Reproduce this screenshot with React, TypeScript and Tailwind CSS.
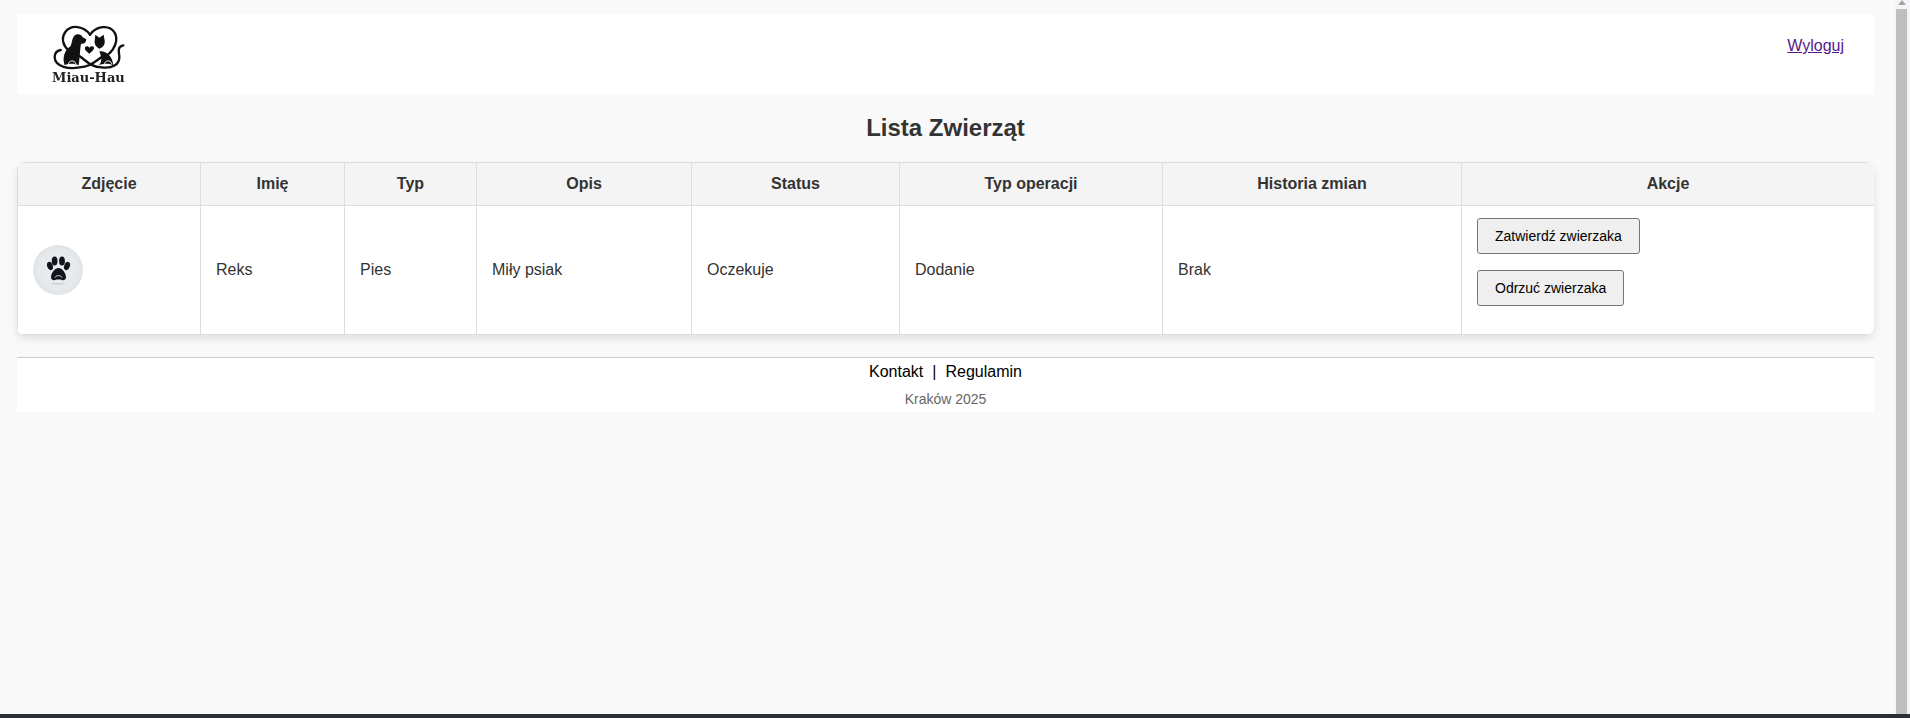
const columns = [
  { label: 'Zdjęcie', width: 'w-[183px]' },
  { label: 'Imię', width: 'w-[144px]' },
  { label: 'Typ', width: 'w-[132px]' },
  { label: 'Opis', width: 'w-[215px]' },
  { label: 'Status', width: 'w-[208px]' },
  { label: 'Typ operacji', width: 'w-[263px]' },
  { label: 'Historia zmian', width: 'w-[299px]' },
  { label: 'Akcje', width: 'w-[413px]' },
]

const cells = ['Reks', 'Pies', 'Miły psiak', 'Oczekuje', 'Dodanie', 'Brak']

function Logo() {
  return (
    <div className="flex w-[100px] flex-col">
      <svg viewBox="0 0 300 150" className="h-[50px] w-[100px] blur-[0.3px]" aria-hidden="true">
        <g fill="none" stroke="#111" strokeWidth="7" strokeLinecap="round">
          <path d="M150 44C132 18 94 12 76 36C62 56 70 78 86 92" />
          <path d="M150 44C168 18 208 12 224 38C236 60 224 86 206 102" />
          <path d="M118 108C140 124 155 142 185 142C215 146 240 135 238 108C236 92 232 80 250 76" />
          <path d="M190 108C165 124 150 142 118 142C90 148 45 142 44 112C44 100 52 92 62 90" />
        </g>
        <path
          d="M102 48C110 40 124 42 128 52L138 57C140 66 132 73 123 71C120 86 120 110 116 136C104 130 86 130 74 136C66 112 74 90 92 78C96 68 96 56 102 48Z"
          fill="#111"
        />
        <path d="M164 62L166 44L178 53L191 44L194 62C196 77 185 83 179 86C170 82 162 73 164 62Z" fill="#111" />
        <path d="M178 94C198 92 218 108 220 136C208 130 190 130 176 136C190 124 182 106 178 94Z" fill="#111" />
        <path d="M148 101C137 93 133 88 135 82C139 77 146 78 148 84C150 78 158 77 162 82C163 88 158 93 148 101Z" fill="#111" />
        <path d="M84 136C86 120 102 118 108 132" fill="none" stroke="#fff" strokeWidth="3" />
        <path d="M192 136C194 120 210 118 216 132" fill="none" stroke="#fff" strokeWidth="3" />
      </svg>
      <span className="ml-[12px] mt-[1px] font-['DejaVu_Serif',serif] text-[13px] font-bold leading-[13px] text-[#222] blur-[0.3px]">
        Miau-Hau
      </span>
    </div>
  )
}

function PawAvatar() {
  return (
    <div className="h-[50px] w-[50px] rounded-full bg-[radial-gradient(circle,#eceff1_0%,#e6e9ec_55%,#d3d9dd_100%)]">
      <svg viewBox="0 0 50 50" className="h-[50px] w-[50px] blur-[0.2px]" fill="#10161c" aria-hidden="true">
        <ellipse cx="17" cy="21" rx="2.8" ry="4.2" transform="rotate(-20 17 21)" />
        <ellipse cx="21.6" cy="16" rx="2.9" ry="4.6" />
        <ellipse cx="29" cy="16" rx="2.9" ry="4.6" />
        <ellipse cx="34" cy="21" rx="2.8" ry="4.2" transform="rotate(20 34 21)" />
        <path d="M25.5 23C29 23 33 28 33 32C33 35 30.5 35.6 29 35C27 34.4 24 34.4 22 35C20.5 35.6 18 35 18 32C18 28 22 23 25.5 23Z" />
        <path d="M22 32.5C23 30 28 30 29 32.5" fill="none" stroke="#dfe4e7" strokeWidth="1" />
        <ellipse cx="25.5" cy="38.8" rx="7" ry="0.8" fill="#c5ced4" />
      </svg>
    </div>
  )
}

function ScrollBar() {
  return (
    <div className="flex w-[15px] shrink-0 flex-col bg-[#f4f4f6] pl-[1px] pr-[3px]">
      <div className="flex h-[9px] items-start justify-center">
        <svg viewBox="0 0 8 5" className="h-[5px] w-[8px]" fill="#a3a3a3" aria-hidden="true">
          <path d="M4 0L8 5H0Z" />
        </svg>
      </div>
      <div className="flex-1 bg-[#bfbfbf]" />
    </div>
  )
}

export default function App() {
  return (
    <div className="flex h-screen flex-col overflow-hidden bg-[#f9f9f9] font-['Liberation_Sans',Arial,sans-serif] text-[#333]">
      <div className="flex min-h-0 flex-1">
        <main className="min-w-0 flex-1 pl-[17px] pr-[21px] pt-[14px]">
          <header className="flex h-[80px] items-start justify-between bg-white pl-[23px] pr-[30px]">
            <div className="pt-[6px]">
              <Logo />
            </div>
            <a href="#" className="pt-[23px] text-[16px] leading-[18px] text-[#551a8b] underline">
              Wyloguj
            </a>
          </header>

          <h2 className="mt-[20px] text-center text-[24px] font-bold leading-[28px]">Lista Zwierząt</h2>

          <div className="mt-[20px] overflow-hidden rounded-[8px] bg-white shadow-[0_4px_8px_rgba(0,0,0,0.1)]">
            <table className="w-full table-fixed border-collapse">
              <thead>
                <tr>
                  {columns.map((c) => (
                    <th
                      key={c.label}
                      className={`${c.width} h-[43px] border border-[#ddd] bg-[#f4f4f4] text-center text-[16px] font-bold`}
                    >
                      {c.label}
                    </th>
                  ))}
                </tr>
              </thead>
              <tbody>
                <tr>
                  <td className="h-[129px] border border-[#ddd] px-[15px]">
                    <PawAvatar />
                  </td>
                  {cells.map((c) => (
                    <td key={c} className="border border-[#ddd] px-[15px] text-[16px]">
                      {c}
                    </td>
                  ))}
                  <td className="border border-[#ddd] px-[15px] pt-[12px] align-top">
                    <div className="flex flex-col items-start gap-[16px]">
                      <button className="h-[36px] rounded-[3px] border border-[#767676] bg-[#efefef] px-[17px] text-[14px] text-black">
                        Zatwierdź zwierzaka
                      </button>
                      <button className="h-[36px] rounded-[3px] border border-[#767676] bg-[#efefef] px-[17px] text-[14px] text-black">
                        Odrzuć zwierzaka
                      </button>
                    </div>
                  </td>
                </tr>
              </tbody>
            </table>
          </div>

          <footer className="mt-[22px] flex h-[55px] flex-col items-center border-t border-[#ccc] bg-white">
            <p className="mt-[5px] text-[16px] leading-[18px] text-black">
              Kontakt
              <span className="mx-[9px]">|</span>
              Regulamin
            </p>
            <p className="mt-[10px] text-[14px] leading-[16px] text-[#666]">Kraków 2025</p>
          </footer>
        </main>
        <ScrollBar />
      </div>
      <div className="h-[4px] bg-[#2b2f36]" />
    </div>
  )
}
